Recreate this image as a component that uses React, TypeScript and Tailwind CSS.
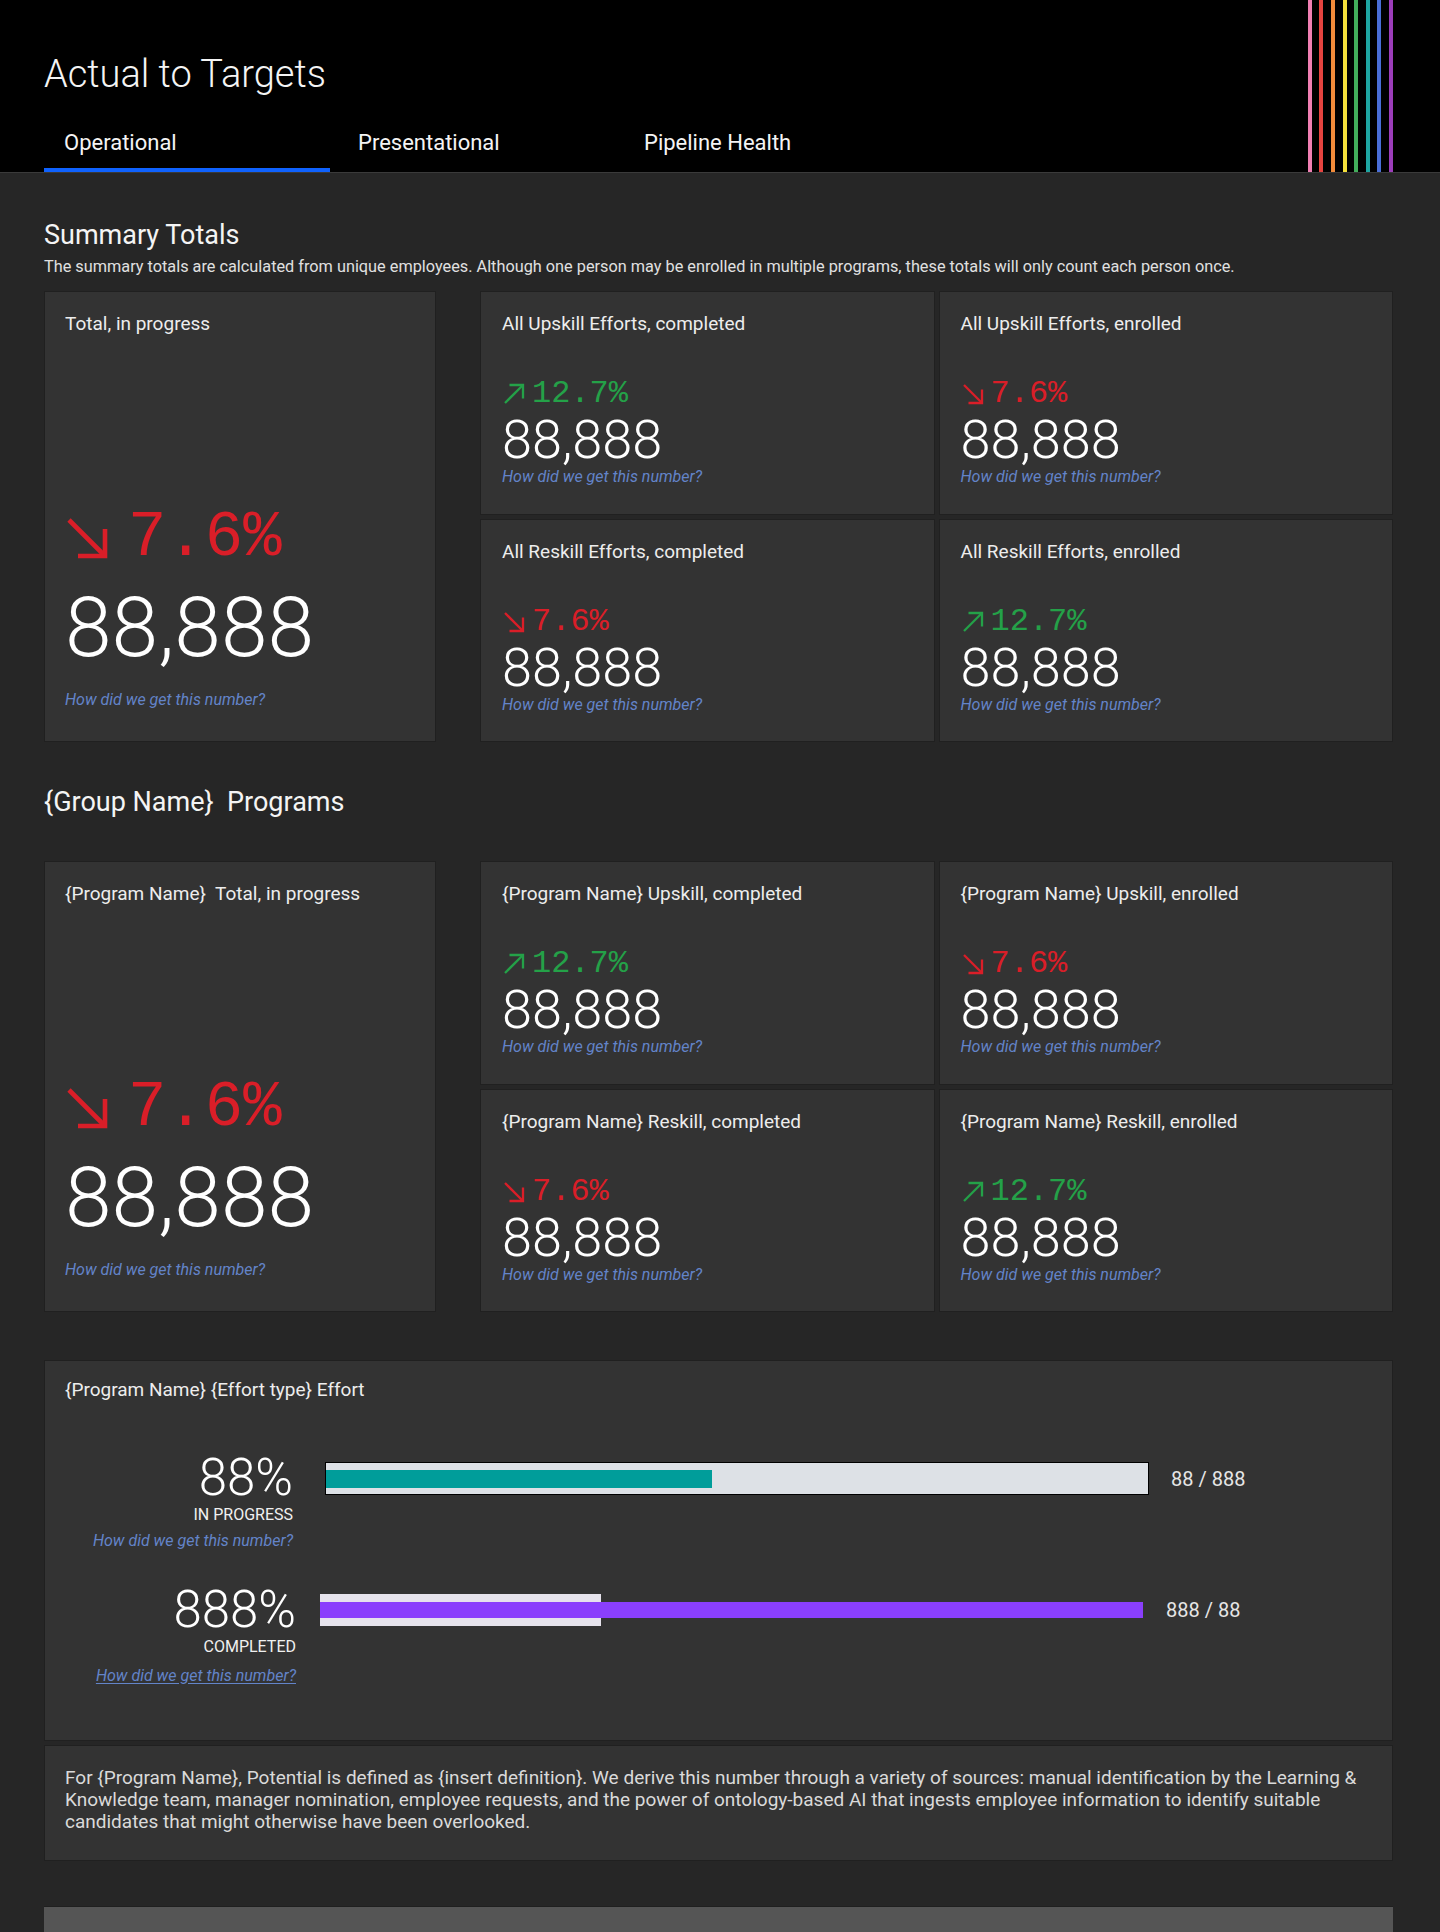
import React from "react";

type Dir = "up" | "down";

const stripes = [
  "bg-[#f07fb3]",
  "bg-[#e6433f]",
  "bg-[#f28b3a]",
  "bg-[#f5e03b]",
  "bg-[#42ad5b]",
  "bg-[#1ea5a1]",
  "bg-[#4a6fd8]",
  "bg-[#9c3dba]",
];

const tabs = ["Operational", "Presentational", "Pipeline Health"];

const summaryCards: { title: string; dir: Dir; pct: string }[] = [
  { title: "All Upskill Efforts, completed", dir: "up", pct: "12.7%" },
  { title: "All Upskill Efforts, enrolled", dir: "down", pct: "7.6%" },
  { title: "All Reskill Efforts, completed", dir: "down", pct: "7.6%" },
  { title: "All Reskill Efforts, enrolled", dir: "up", pct: "12.7%" },
];

const programCards: { title: string; dir: Dir; pct: string }[] = [
  { title: "{Program Name} Upskill, completed", dir: "up", pct: "12.7%" },
  { title: "{Program Name} Upskill, enrolled", dir: "down", pct: "7.6%" },
  { title: "{Program Name} Reskill, completed", dir: "down", pct: "7.6%" },
  { title: "{Program Name} Reskill, enrolled", dir: "up", pct: "12.7%" },
];

const definition =
  "For {Program Name}, Potential is defined as {insert definition}. We derive this number through a variety of sources: manual identification by the Learning & Knowledge team, manager nomination, employee requests, and the power of ontology-based AI that ingests employee information to identify suitable candidates that might otherwise have been overlooked.";

// diagonal trend arrow, drawn tight to its box
function TrendArrow({ dir, className }: { dir: Dir; className: string }) {
  return (
    <svg viewBox="0 0 24 24" fill="none" stroke="currentColor" strokeWidth={2.3} className={className}>
      {dir === "down" ? (
        <>
          <path d="M3 3L20.5 20.5" />
          <path d="M21 7.5V21H7.5" />
        </>
      ) : (
        <>
          <path d="M3 21L20.5 3.5" />
          <path d="M7.5 3H21V16.5" />
        </>
      )}
    </svg>
  );
}

function HowLink({ underline }: { underline?: boolean }) {
  return (
    <div
      className={`text-[16px] leading-[20px] italic text-[#6384c9] ${underline ? "underline underline-offset-2" : ""}`}
    >
      How did we get this number?
    </div>
  );
}

function SmallCard({ title, dir, pct }: { title: string; dir: Dir; pct: string }) {
  const color = dir === "up" ? "text-[#24a148]" : "text-[#da1e28]";
  return (
    <div className="bg-[#333333] border border-[#202020] pl-[21px] pt-[20px]">
      <div className="text-[19px] leading-[24px] text-[#ededed]">{title}</div>
      <div className={`mt-[40px] flex items-center gap-[6px] ${color}`}>
        <TrendArrow dir={dir} className="w-[24px] h-[24px]" />
        <span className="font-['Liberation_Mono',monospace] text-[32px] leading-[36px]">{pct}</span>
      </div>
      <div className="mt-[1px] text-[54px] leading-[54px] font-light text-white">88,888</div>
      <HowLink />
    </div>
  );
}

function BigCard({ title }: { title: string }) {
  return (
    <div className="w-[392px] shrink-0 bg-[#333333] border border-[#202020] pl-[20px] pt-[20px] pb-[31px] flex flex-col">
      <div className="text-[19px] leading-[24px] text-[#ededed] whitespace-pre">{title}</div>
      <div className="mt-auto">
        <div className="flex items-center gap-[16px] text-[#da1e28] -ml-[3px]">
          <TrendArrow dir="down" className="w-[50px] h-[48px]" />
          <span className="font-['Liberation_Mono',monospace] text-[64px] leading-[64px]">7.6%</span>
        </div>
        <div className="mt-[16px] text-[84px] leading-[84px] font-light text-white">88,888</div>
        <div className="mt-[20px]">
          <HowLink />
        </div>
      </div>
    </div>
  );
}

function CardsRow({ big, cards }: { big: string; cards: { title: string; dir: Dir; pct: string }[] }) {
  return (
    <div className="flex gap-[44px] h-[451px]">
      <BigCard title={big} />
      <div className="flex-1 grid grid-cols-2 grid-rows-2 gap-[4px]">
        {cards.map((c) => (
          <SmallCard key={c.title} title={c.title} dir={c.dir} pct={c.pct} />
        ))}
      </div>
    </div>
  );
}

export default function App() {
  return (
    <div className="min-h-screen bg-[#262626] text-[#f4f4f4] font-['Roboto','Liberation_Sans',sans-serif]">
      {/* header */}
      <header className="h-[173px] bg-black border-b border-[#3a3a3a] flex justify-between pl-[44px] pr-[47px]">
        <div>
          <div className="pt-[54px] text-[38px] leading-[40px] font-light text-[#f4f4f4]">Actual to Targets</div>
          <nav className="mt-[24px] flex">
            {tabs.map((t, i) => (
              <div
                key={t}
                className={`w-[286px] pt-[13px] pb-[13px] border-b-4 text-[22px] leading-[24px] text-[#f4f4f4] ${
                  i === 0 ? "pl-[20px] border-[#0f62fe]" : "pl-[28px] border-transparent"
                }`}
              >
                {t}
              </div>
            ))}
          </nav>
        </div>
        <div className="flex gap-[7.6px] h-full">
          {stripes.map((s) => (
            <div key={s} className={`w-[4px] h-full ${s}`} />
          ))}
        </div>
      </header>

      <main className="pl-[44px] pr-[47px]">
        {/* Summary totals */}
        <div className="pt-[46px] text-[27px] leading-[32px] text-[#f4f4f4]">Summary Totals</div>
        <div className="mt-[6px] text-[16.3px] leading-[20px] text-[#e0e0e0]">
          The summary totals are calculated from unique employees. Although one person may be enrolled in multiple
          programs, these totals will only count each person once.
        </div>
        <div className="mt-[14px]">
          <CardsRow big="Total, in progress" cards={summaryCards} />
        </div>

        {/* Group programs */}
        <div className="mt-[44px] text-[27px] leading-[32px] text-[#f4f4f4] whitespace-pre">{"{Group Name}  Programs"}</div>
        <div className="mt-[43px]">
          <CardsRow big={"{Program Name}  Total, in progress"} cards={programCards} />
        </div>

        {/* Effort */}
        <div className="mt-[48px] bg-[#333333] border border-[#202020] pl-[20px] pt-[17px] pb-[54px]">
          <div className="text-[19px] leading-[24px] text-[#ededed]">{"{Program Name} {Effort type} Effort"}</div>

          <div className="mt-[50px] flex items-start">
            <div className="w-[228px] flex flex-col items-end text-right">
              <div className="text-[51px] leading-[52px] font-light text-white">88%</div>
              <div className="mt-[2px] text-[16px] leading-[18px] uppercase text-[#f0f0f0]">In progress</div>
              <div className="mt-[7px]">
                <HowLink />
              </div>
            </div>
            <div className="ml-[32px] mt-[10px] w-[824px] h-[33px] bg-[#dde1e6] border border-black flex items-center">
              <div className="h-[18px] w-[47%] bg-[#009d9a]" />
            </div>
            <div className="ml-[22px] mt-[10px] h-[33px] flex items-center text-[20px] text-[#e6e6e6]">88 / 888</div>
          </div>

          <div className="mt-[33px] flex items-start">
            <div className="w-[231px] flex flex-col items-end text-right">
              <div className="text-[51px] leading-[52px] font-light text-white">888%</div>
              <div className="mt-[2px] text-[16px] leading-[18px] uppercase text-[#f0f0f0]">Completed</div>
              <div className="mt-[10px]">
                <HowLink underline />
              </div>
            </div>
            <div className="relative ml-[24px] mt-[10px] w-[823px] h-[32px] flex items-center">
              <div className="absolute inset-y-0 left-0 w-[281px] bg-[#e6e3ec]" />
              <div className="relative h-[16px] w-full bg-[#8a3ffc]" />
            </div>
            <div className="ml-[23px] mt-[10px] h-[32px] flex items-center text-[20px] text-[#e6e6e6]">888 / 88</div>
          </div>
        </div>

        {/* definition */}
        <div className="mt-[4px] bg-[#333333] border border-[#202020] pl-[20px] pr-[20px] pt-[21px] pb-[27px] text-[19px] leading-[22px] text-[#dadada]">
          {definition}
        </div>

        <div className="mt-[45px] h-[28px] bg-[#555555] border-t border-[#1f1f1f]" />
      </main>
    </div>
  );
}
